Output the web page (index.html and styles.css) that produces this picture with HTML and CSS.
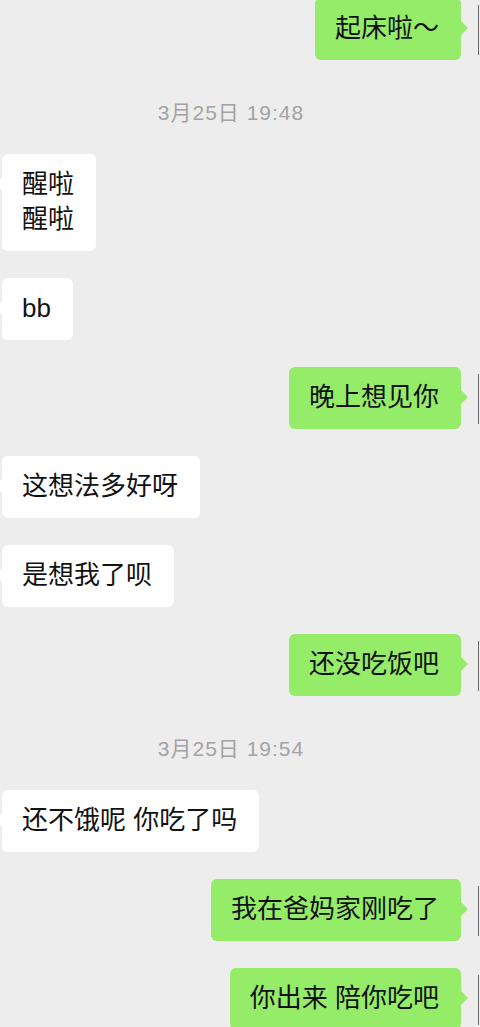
FILE: index.html
```html
<!doctype html>
<html lang="zh-CN">
<head>
  <meta charset="UTF-8">
  <meta name="viewport" content="width=device-width, initial-scale=1.0">
  <title>聊天</title>
  <link rel="stylesheet" href="styles.css">
</head>
<body>
  <div class="chat">
    <div class="row me">
      <div class="bubble">起床啦～</div>
      <div class="avatar"></div>
    </div>

    <p class="time">3月25日 19:48</p>

    <div class="row other">
      <div class="bubble">醒啦<br>醒啦</div>
    </div>
    <div class="row other">
      <div class="bubble">bb</div>
    </div>
    <div class="row me">
      <div class="bubble">晚上想见你</div>
      <div class="avatar"></div>
    </div>
    <div class="row other">
      <div class="bubble">这想法多好呀</div>
    </div>
    <div class="row other">
      <div class="bubble">是想我了呗</div>
    </div>
    <div class="row me">
      <div class="bubble">还没吃饭吧</div>
      <div class="avatar"></div>
    </div>

    <p class="time">3月25日 19:54</p>

    <div class="row other">
      <div class="bubble">还不饿呢 你吃了吗</div>
    </div>
    <div class="row me">
      <div class="bubble">我在爸妈家刚吃了</div>
      <div class="avatar"></div>
    </div>
    <div class="row me">
      <div class="bubble">你出来 陪你吃吧</div>
      <div class="avatar"></div>
    </div>
  </div>
</body>
</html>
```

FILE: styles.css
```css
* {
    margin: 0;
    padding: 0;
    box-sizing: border-box;
}

body {
    background-color: #ededed;
    font-family: "Liberation Sans", "Noto Sans CJK SC", sans-serif;
    color: #111;
    overflow: hidden;
}

.chat {
    display: flex;
    flex-direction: column;
    gap: 27px;
    margin-top: -2px;
}

.row {
    display: flex;
    align-items: flex-start;
}

.row.other {
    justify-content: flex-start;
    padding-left: 2px;
}

.row.me {
    justify-content: flex-end;
}

.bubble {
    position: relative;
    font-size: 26px;
    line-height: 35px;
    padding: 13px 22px 14px 20px;
    border-radius: 6px;
    white-space: nowrap;
}

.other .bubble {
    background-color: #fff;
}

.me .bubble {
    background-color: #95ec69;
}

/* little tail pointing at the avatar */
.bubble::after {
    content: "";
    position: absolute;
    top: 23px;
    border-top: 7px solid transparent;
    border-bottom: 7px solid transparent;
}

.other .bubble::after {
    left: -6px;
    border-right: 6px solid #fff;
}

.me .bubble::after {
    right: -7px;
    border-left: 7px solid #95ec69;
}

/* avatars are cut off by the screen edge, only a sliver shows */
.avatar {
    width: 1px;
    height: 50px;
    margin-top: 7px;
    margin-left: 17px;
    margin-right: 1px;
    background-color: #6a6a6a;
}

.time {
    text-align: center;
    font-size: 21px;
    line-height: 26px;
    letter-spacing: 1px;
    color: #a3a3a3;
    margin: 13px 0 1px;
    padding-right: 18px;
}
```
